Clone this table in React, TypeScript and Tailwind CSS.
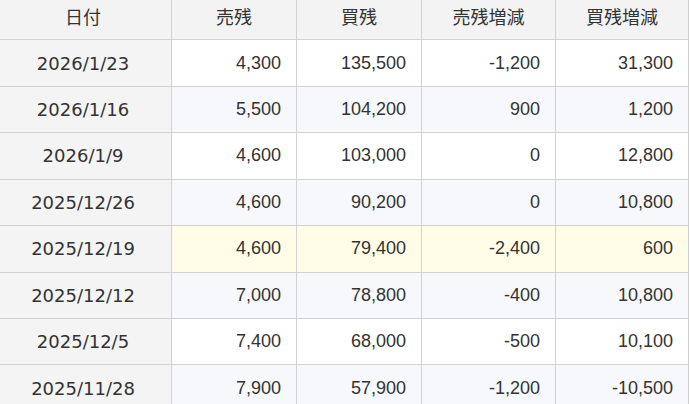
import React from "react";

const rows: string[][] = [
  ["2026/1/23", "4,300", "135,500", "-1,200", "31,300"],
  ["2026/1/16", "5,500", "104,200", "900", "1,200"],
  ["2026/1/9", "4,600", "103,000", "0", "12,800"],
  ["2025/12/26", "4,600", "90,200", "0", "10,800"],
  ["2025/12/19", "4,600", "79,400", "-2,400", "600"],
  ["2025/12/12", "7,000", "78,800", "-400", "10,800"],
  ["2025/12/5", "7,400", "68,000", "-500", "10,100"],
  ["2025/11/28", "7,900", "57,900", "-1,200", "-10,500"],
];

const headers = ["日付", "売残", "買残", "売残増減", "買残増減"];

export default function App() {
  return (
    <div className="w-[690px] h-[404px] overflow-hidden bg-white">
      <div
        className="-mt-[6px] -ml-[5px] w-[694px] grid grid-cols-[177px_125px_125px_134px_133px] auto-rows-[46.43px] text-[#333] text-[18px]"
      >
        {headers.map((h) => (
          <div
            key={h}
            className="flex items-center justify-center bg-[#f3f3f3] border-b border-r border-[#d2d2d2] font-['Noto_Sans_CJK_JP',sans-serif]"
          >
            {h}
          </div>
        ))}
        {rows.map((r, i) => {
          const highlight = i === 4;
          const bg = highlight ? "bg-[#fffde8]" : i % 2 === 1 ? "bg-[#f6f8fb]" : "bg-white";
          return (
            <React.Fragment key={r[0]}>
              <div className="flex items-center justify-center bg-[#f4f4f4] border-b border-r border-[#d2d2d2] font-['DejaVu_Sans',sans-serif]">
                {r[0]}
              </div>
              {r.slice(1).map((v, j) => (
                <div
                  key={j}
                  className={`flex items-center justify-end pr-[15px] border-b border-r border-[#d2d2d2] font-['Liberation_Sans',Arial,sans-serif] ${bg}`}
                >
                  {v}
                </div>
              ))}
            </React.Fragment>
          );
        })}
      </div>
    </div>
  );
}
